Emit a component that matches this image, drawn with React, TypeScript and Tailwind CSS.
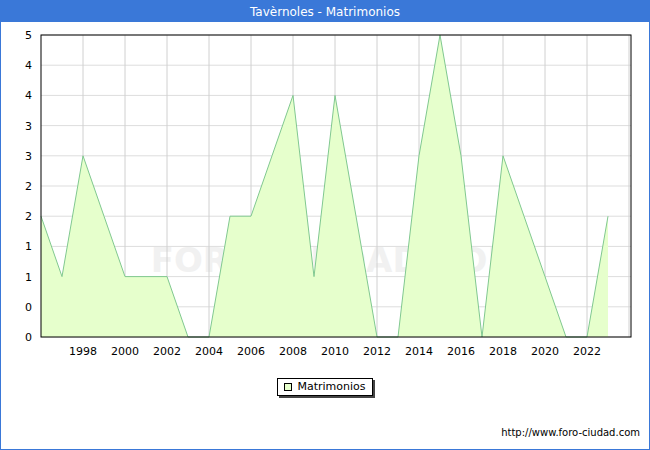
import React from "react";

const data = [2,1,3,2,1,1,1,0,0,2,2,3,4,1,4,2,0,0,3,5,3,0,3,2,1,0,0,2];
const X0 = 40, X1 = 630, Y0 = 13, Y1 = 315;
const xs = (i: number) => X0 + i * 21;
const ys = (v: number) => Y1 - v * 60.4;

export default function App() {
  const pts = data.map((v, i) => `${xs(i)},${ys(v)}`).join(" ");
  const area = `${xs(0)},${Y1} ${pts} ${xs(data.length - 1)},${Y1}`;
  const yl = ["0","0","1","1","2","2","3","3","4","4","5"];
  return (
    <div className="w-[650px] h-[450px] flex flex-col border border-[#3a78d8] bg-white" style={{ fontFamily: '"DejaVu Sans", Verdana, sans-serif' }}>
      <div className="h-[21px] bg-[#3a78d8] text-white text-[12px] flex items-center justify-center shrink-0">Tavèrnoles - Matrimonios</div>
      <svg width="648" height="340" className="shrink-0">
        <text x="335" y="250" textAnchor="middle" fontSize="34" fill="#f1f1f1" fontWeight="bold">FORO-CIUDAD.COM</text>
        {yl.map((_, k) => (
          <line key={k} x1={X0} x2={X1} y1={Y1 - k * 30.2} y2={Y1 - k * 30.2} stroke="#dddddd" />
        ))}
        {Array.from({ length: 14 }, (_, k) => (
          <line key={k} x1={xs(2 + 2 * k)} x2={xs(2 + 2 * k)} y1={Y0} y2={Y1} stroke="#d0d0d0" />
        ))}
        <polygon points={area} fill="#e6ffcc" />
        <polyline points={pts} fill="none" stroke="#80c890" strokeWidth="1" />
        <rect x={X0} y={Y0} width={X1 - X0} height={Y1 - Y0} fill="none" stroke="#000" />
        {yl.map((t, k) => (
          <text key={k} x="31" y={Y1 - k * 30.2 + 4} textAnchor="end" fontSize="11" fill="#000">{t}</text>
        ))}
        {Array.from({ length: 13 }, (_, k) => (
          <text key={k} x={xs(2 + 2 * k)} y={Y1 + 18} textAnchor="middle" fontSize="11" fill="#000">{1998 + 2 * k}</text>
        ))}
      </svg>
      <div className="flex justify-center mt-[16px]">
        <div className="flex items-center gap-[5px] border border-black px-[6px] h-[18px] text-[11px] shadow-[2px_2px_0_#444]">
          <span className="w-[8px] h-[8px] border border-black bg-[#e6ffcc]" />
          Matrimonios
        </div>
      </div>
      <div className="flex-1" />
      <div className="text-[10px] text-right pr-[9px] pb-[9px]">http://www.foro-ciudad.com</div>
    </div>
  );
}
